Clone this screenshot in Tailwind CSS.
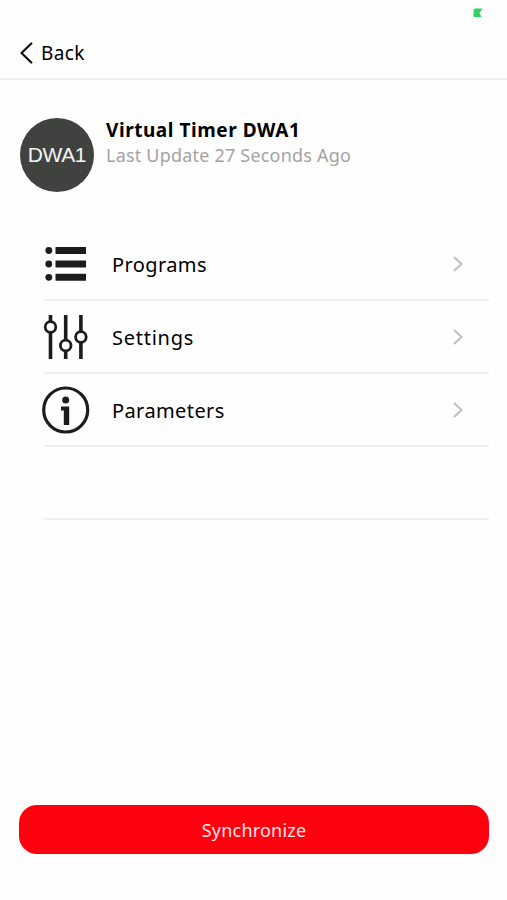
<!DOCTYPE html>
<html lang="en">
<head>
  <meta charset="UTF-8" />
  <meta name="viewport" content="width=device-width, initial-scale=1.0"/>
  <title>Virtual Timer DWA1</title>
  <script src="https://cdn.jsdelivr.net/npm/@tailwindcss/browser@4"></script>
</head>
<body class="bg-[#fefefe] h-[900px] flex flex-col overflow-hidden text-black font-['Noto_Sans',sans-serif]">

  <!-- Status indicator -->
  <div class="h-[26px] flex justify-end pt-2 pr-6">
    <svg class="w-[10px] h-[10px]" viewBox="0 0 10 10"><path d="M2 .5H9.500L6.500 5L8.500 9H2Q.5 9 .5 7.500V2Q.5 .5 2 .5Z" fill="#34d064"/></svg>
  </div>

  <!-- Header -->
  <header class="h-[54px] border-b-2 border-[#efefef] shrink-0">
    <button class="h-[53px] pl-5 flex items-center">
      <svg class="w-[13px] h-[22px]" viewBox="0 0 13 22" fill="none" stroke="#111" stroke-width="2.2" stroke-linecap="round" stroke-linejoin="round"><path d="M11.300 1.500L1.500 11L11.300 20.500"/></svg>
      <span class="ml-[8px] text-[19px] leading-6 tracking-[0.4px]">Back</span>
    </button>
  </header>

  <!-- Device -->
  <section class="h-[148px] shrink-0 flex pl-5 pt-[38px]">
    <div class="size-[74px] rounded-full bg-[#3f423f] flex items-center justify-center text-[#f5f5f5] text-[21px] tracking-[-0.4px] font-['Liberation_Sans',sans-serif]">DWA1</div>
    <div class="ml-[12px]">
      <h1 class="text-[19px] leading-[25px] font-bold tracking-[0.55px]">Virtual Timer DWA1</h1>
      <p class="text-[18px] leading-[25px] text-[#a3a3a3] tracking-[0.2px]">Last Update 27 Seconds Ago</p>
    </div>
  </section>

  <!-- Menu -->
  <nav class="ml-[44px] mr-[18px] text-[20px]">
    <a class="h-[73px] flex items-center border-b-2 border-[#f0f0f0]">
      <svg class="w-[48px] h-[48px] -ml-[2px]" viewBox="0 0 48 48" fill="#1c1c1c">
        <circle cx="6.800" cy="10.500" r="3.400"/><circle cx="6.800" cy="24" r="3.400"/><circle cx="6.800" cy="37.300" r="3.400"/>
        <path d="M13.500 7H44V14H13.500ZM13.500 20.500H44V27.500H13.500ZM13.500 33.800H44V40.800H13.500Z"/>
      </svg>
      <span class="ml-[22px] flex-1 pt-[2px] tracking-[0.4px]">Programs</span>
      <svg class="w-[10px] h-[16px] mr-[26px]" viewBox="0 0 10 16" fill="none" stroke="#c0c0c0" stroke-width="2.200"><path d="M1 1L8.500 8L1 15"/></svg>
    </a>
    <a class="h-[73px] flex items-center border-b-2 border-[#f0f0f0]">
      <svg class="w-[48px] h-[48px] -ml-[2px]" viewBox="0 0 48 48" fill="none" stroke="#1c1c1c" stroke-width="3.600">
        <path d="M8.500 2V8M8.500 19V46M23.700 2V27M23.700 38V46M38.900 2V18M38.900 29V46"/>
        <g stroke-width="2.800"><circle cx="8.500" cy="14" r="5.300"/><circle cx="23.700" cy="32.500" r="5.300"/><circle cx="38.900" cy="24" r="5.300"/></g>
      </svg>
      <span class="ml-[22px] flex-1 pt-[2px] tracking-[0.75px]">Settings</span>
      <svg class="w-[10px] h-[16px] mr-[26px]" viewBox="0 0 10 16" fill="none" stroke="#c0c0c0" stroke-width="2.200"><path d="M1 1L8.500 8L1 15"/></svg>
    </a>
    <a class="h-[73px] flex items-center border-b-2 border-[#f0f0f0]">
      <svg class="w-[48px] h-[48px] -ml-[2px]" viewBox="0 0 48 48" fill="#1c1c1c">
        <circle cx="23.700" cy="24" r="22" fill="none" stroke="#1c1c1c" stroke-width="3.200"/>
        <circle cx="23.700" cy="14" r="3.500"/>
        <path d="M19 20.500H27.200V39H21.800V24.500H19Z"/>
      </svg>
      <span class="ml-[22px] flex-1 pt-[3px] tracking-[0.4px]">Parameters</span>
      <svg class="w-[10px] h-[16px] mr-[26px]" viewBox="0 0 10 16" fill="none" stroke="#c0c0c0" stroke-width="2.200"><path d="M1 1L8.500 8L1 15"/></svg>
    </a>
    <div class="h-[73px] border-b-2 border-[#f0f0f0]"></div>
  </nav>

  <!-- Sync button -->
  <button class="mt-auto mb-[46px] ml-[19px] mr-[18px] h-[49px] pt-[2px] shrink-0 rounded-[18px] bg-[#ff000f] text-[#ffe5e5] text-[18px] tracking-[0.2px]">Synchronize</button>

</body>
</html>
